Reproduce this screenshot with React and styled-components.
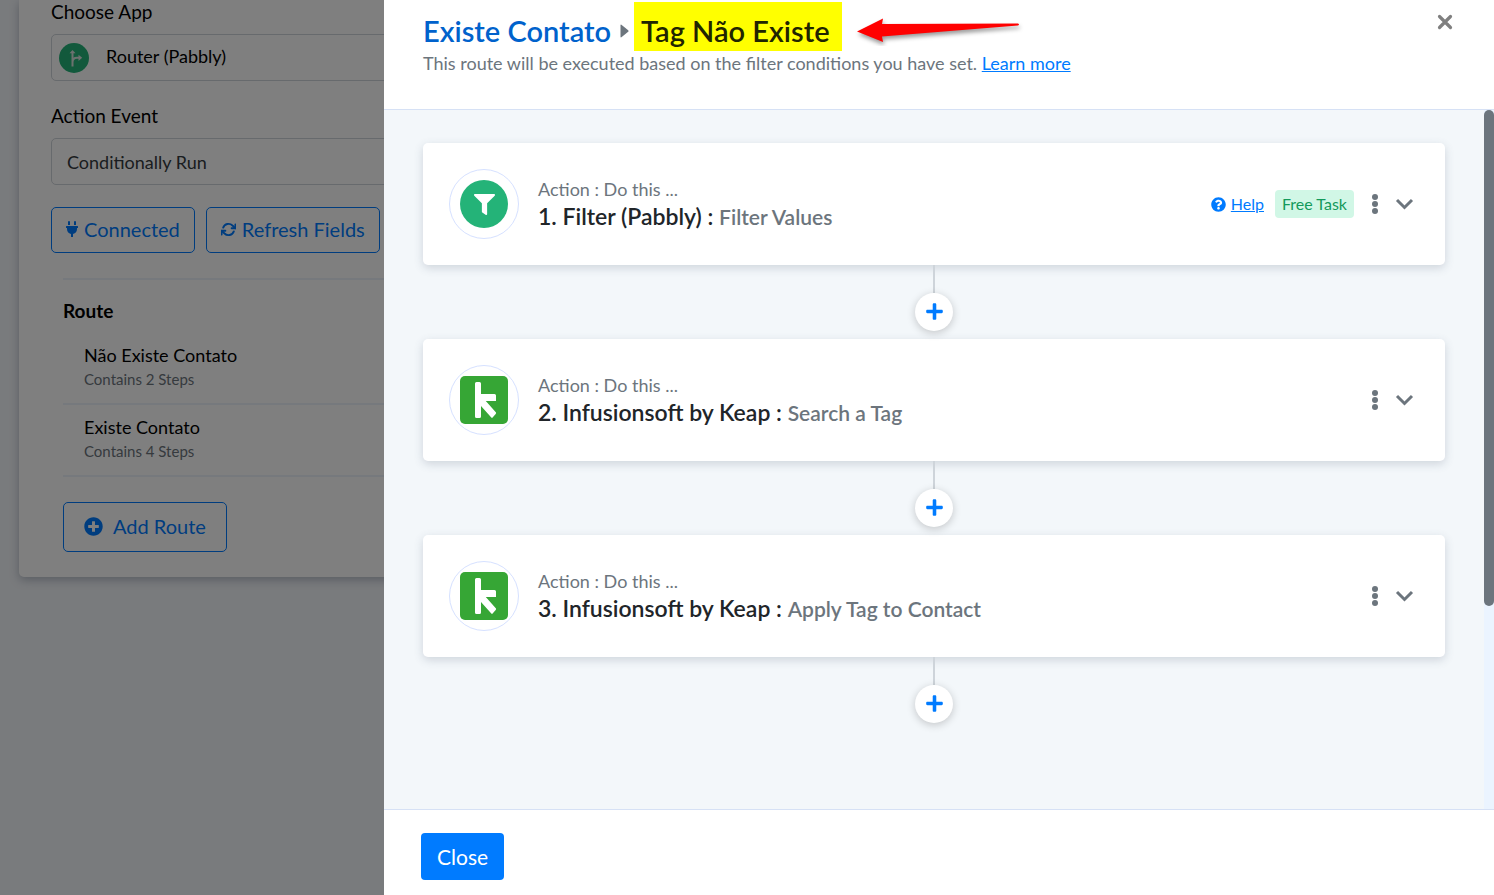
import React, {useState} from "react";
import styled, {createGlobalStyle} from "styled-components";
import {
    FaPlug,
    FaPlusCircle,
    FaPlus,
    FaQuestionCircle,
    FaFilter,
} from "react-icons/fa";
import {FiRefreshCw} from "react-icons/fi";

const GlobalStyle = createGlobalStyle`
    *, *::before, *::after {
        box-sizing : border-box;
    }

    body {
        margin : 0;
        overflow : hidden;
        background : #f3f6fa;
        color : #212529;
        font-family : Lato, "Open Sans", sans-serif;
        font-size : 18px;
        line-height : 24px;
    }

    button, select {
        font-family : inherit;
    }

    a {
        color : #007bff;
    }
`;

/* ---------- page behind the drawer ---------- */

const Page = styled.main`
    min-height : 100vh;
    padding : 0 19px;
`;

const SetupCard = styled.section`
    padding : 0 32px 25px;
    background : #fff;
    border-radius : 0 0 5px 5px;
    box-shadow : 0 3px 10px rgba(60, 75, 100, 0.35);
`;

const Field = styled.div`
    padding-bottom : ${props => props.$last ? 22 : 23}px;
`;

const FieldLabel = styled.label`
    display : block;
    margin-bottom : 10px;
    color : #000;
    font-size : 19px;
`;

const SelectBox = styled.div`
    position : relative;
`;

const Select = styled.select`
    display : block;
    width : 100%;
    height : 47px;
    padding : ${props => props.$withIcon ? "0 15px 4px 54px" : "0 15px"};
    appearance : none;
    background : #fff;
    border : 1px solid #ced4da;
    border-radius : 5px;
    color : ${props => props.$withIcon ? "#000" : "#343a40"};
    font-size : 18px;
`;

const SelectIcon = styled.svg`
    position : absolute;
    left : 8px;
    top : 9px;
`;

const ButtonRow = styled.div`
    display : flex;
    gap : 11px;
`;

const OutlineButton = styled.button`
    display : inline-flex;
    align-items : center;
    justify-content : center;
    gap : ${props => props.$large ? 10 : 6}px;
    height : ${props => props.$large ? 50 : 46}px;
    padding : 0 ${props => props.$large ? 20 : 14}px 2px;
    background : transparent;
    border : 1px solid #007bff;
    border-radius : 5px;
    color : #007bff;
    font-size : 20px;
    white-space : nowrap;
`;

const PlugIcon = styled(FaPlug)`
    width : 12px;
    height : 16px;
`;

const Routes = styled.div`
    margin : 25px 0 0 12px;
    border-top : 2px solid #edf3fa;
`;

const RoutesTitle = styled.h2`
    margin : 0;
    padding : 19px 0 10px;
    color : #000;
    font-size : 19px;
    font-weight : 700;
    line-height : 24px;
`;

const RouteList = styled.ul`
    margin : 0 0 25px;
    padding : 0;
    list-style : none;
`;

const RouteItem = styled.li`
    padding : 10px 21px 12px;
    border-bottom : 2px solid #edf3fa;
`;

const RouteName = styled.div`
    color : #000;
    font-size : 18px;
`;

const RouteInfo = styled.div`
    color : #6c757d;
    font-size : 15px;
`;

const Backdrop = styled.div`
    position : fixed;
    inset : 0;
    background : rgba(0, 0, 0, 0.5);
`;

/* ---------- drawer ---------- */

const Drawer = styled.aside`
    position : fixed;
    top : 0;
    right : 0;
    bottom : 0;
    left : 384px;
    display : flex;
    flex-direction : column;
    background : #fff;
`;

const DrawerHeader = styled.header`
    display : flex;
    align-items : flex-start;
    justify-content : space-between;
    padding : 2px 41px 34px 39px;
    border-bottom : 1px solid #d6e1f5;
`;

const Title = styled.h1`
    display : flex;
    align-items : flex-end;
    margin : 0;
    font-size : 29px;
    font-weight : 600;
    line-height : 41px;
`;

const Crumb = styled.span`
    color : #0062cc;
`;

const CrumbArrow = styled.svg`
    margin : 0 5px 13px 9px;
`;

const Highlight = styled.mark`
    position : relative;
    padding : 8px 12px 0 7px;
    background : #ff0;
    color : #212500;
`;

const PointerArrow = styled.svg`
    position : absolute;
    left : 100%;
    top : 8px;
    margin-left : 10px;
`;

const Subtitle = styled.p`
    margin : 0;
    color : #6c757d;
`;

const CloseIcon = styled.button`
    display : flex;
    padding : 11px 0 0;
    background : none;
    border : 0;
`;

const DrawerBody = styled.div`
    display : flex;
    flex : 1;
    min-height : 0;
    background : #f3f7fa;
`;

const StepList = styled.div`
    flex : 1;
    overflow-y : auto;
    padding : 33px 39px 366px;
    scrollbar-width : none;
`;

const ScrollTrack = styled.div`
    width : 10px;
    background : #ebf4ff;
`;

const ScrollThumb = styled.div`
    height : 71%;
    background : #6c757d;
    border-radius : 5px;
`;

const DrawerFooter = styled.footer`
    padding : 23px 37px 15px;
    border-top : 1px solid #d6e1f5;
`;

const PrimaryButton = styled.button`
    height : 47px;
    padding : 0 16px 1px;
    background : #007bff;
    border : 0;
    border-radius : 4px;
    color : #fff;
    font-size : 21px;
`;

const StepCard = styled.article`
    display : flex;
    align-items : center;
    padding : 26px;
    background : #fff;
    border-radius : 5px;
    box-shadow : 0 3px 10px rgba(60, 75, 100, 0.2);
`;

const AppIcon = styled.div`
    display : flex;
    align-items : center;
    justify-content : center;
    width : 70px;
    height : 70px;
    margin-right : 19px;
    border : 1px solid #d6e1ff;
    border-radius : 50%;
`;

const FilterBadge = styled.div`
    display : flex;
    align-items : center;
    justify-content : center;
    width : 48px;
    height : 48px;
    border-radius : 50%;
    background : #24b378;
    color : #fff;
    font-size : 21px;
`;

const StepText = styled.div`
    flex : 1;
`;

const StepHint = styled.div`
    color : #6c757d;
    font-size : 18px;
`;

const StepName = styled.h3`
    margin : 0;
    font-size : 23px;
    font-weight : 600;
    line-height : 30px;
`;

const StepEvent = styled.span`
    color : #6c757d;
    font-size : 21px;
`;

const StepActions = styled.div`
    display : flex;
    align-items : center;
    padding-right : 5px;
`;

const HelpLink = styled.a`
    margin : 0 11px 0 5px;
    font-size : 16px;
`;

const HelpIcon = styled(FaQuestionCircle)`
    color : #007bff;
    font-size : 15px;
`;

const FreeTag = styled.span`
    padding : 2px 7px;
    margin-right : 17px;
    background : #d1f7e6;
    border-radius : 4px;
    color : #149a5b;
    font-size : 16px;
`;

const IconButton = styled.button`
    display : flex;
    padding : 0;
    margin-left : ${props => props.$gap || 0}px;
    background : none;
    border : 0;
    color : #6c757d;
`;

const Connector = styled.div`
    display : flex;
    flex-direction : column;
    align-items : center;
    padding-bottom : 8px;

    &::before {
        content : "";
        width : 2px;
        height : 28px;
        background : #ced4da;
    }
`;

const AddStep = styled.button`
    display : flex;
    align-items : center;
    justify-content : center;
    width : 38px;
    height : 38px;
    padding : 0 0 1px;
    background : #fff;
    border : 0;
    border-radius : 50%;
    box-shadow : 0 2px 8px rgba(0, 0, 0, 0.2);
    color : #007bff;
    font-size : 19px;
`;

function RouterIcon(){
    return(
        <SelectIcon width="30" height="30" viewBox="0 0 30 30" aria-hidden="true">
            <circle cx="15" cy="15" r="15" fill="#24b378" />
            <path
                d="M13.500 23.500V9M13.500 19.500c0-2.600 1.500-4.700 4.500-4.700h2"
                fill="none" stroke="#d9e2de" strokeWidth="2"
            />
            <path d="M10.500 10.300L13.500 7l3 3.300zM19.500 11.700l3.700 3.100-3.700 3.100z" fill="#d9e2de" />
        </SelectIcon>
    );
}

function KeapIcon(){
    return(
        <svg width="48" height="48" viewBox="0 0 48 48" aria-hidden="true">
            <rect width="48" height="48" rx="5" fill="#36a635" />
            <path
                d="M15 7.500Q15 6 16.500 6H19.500Q21 6 21 7.500V18H34.500Q36 18 36 19.500V25H25.800L36 36.500Q36.300 37.300 35.700 38L32.600 41.600Q32 42.200 31.300 41.500L21 30V40.500Q21 42 19.500 42H16.500Q15 42 15 40.500Z"
                fill="#fff"
            />
        </svg>
    );
}

function StepIcon({app}){
    if(app === "filter"){
        return <FilterBadge><FaFilter /></FilterBadge>;
    }
    return <KeapIcon />;
}

const routes = [
    {name : "Não Existe Contato", info : "Contains 2 Steps"},
    {name : "Existe Contato", info : "Contains 4 Steps"},
];

const steps = [
    {id : 1, app : "filter", name : "Filter (Pabbly)", event : "Filter Values", free : true},
    {id : 2, app : "keap", name : "Infusionsoft by Keap", event : "Search a Tag"},
    {id : 3, app : "keap", name : "Infusionsoft by Keap", event : "Apply Tag to Contact"},
];

function Step({step}){
    return(
        <>
            <StepCard>
                <AppIcon><StepIcon app = {step.app} /></AppIcon>
                <StepText>
                    <StepHint>Action : Do this ...</StepHint>
                    <StepName>
                        {step.id}. {step.name} : <StepEvent>{step.event}</StepEvent>
                    </StepName>
                </StepText>
                <StepActions>
                    {step.free && (
                        <>
                            <HelpIcon />
                            <HelpLink href="#help">Help</HelpLink>
                            <FreeTag>Free Task</FreeTag>
                        </>
                    )}
                    <IconButton aria-label="More options">
                        <svg width="8" height="20" viewBox="0 0 8 20" fill="currentColor">
                            <circle cx="4" cy="3" r="3" />
                            <circle cx="4" cy="10" r="3" />
                            <circle cx="4" cy="17" r="3" />
                        </svg>
                    </IconButton>
                    <IconButton $gap = {16} aria-label="Expand step">
                        <svg width="19" height="12" viewBox="0 0 19 12" fill="none">
                            <path d="M2 2L9.500 9.500L17 2" stroke="currentColor" strokeWidth="3" />
                        </svg>
                    </IconButton>
                </StepActions>
            </StepCard>
            <Connector>
                <AddStep aria-label="Add step"><FaPlus /></AddStep>
            </Connector>
        </>
    );
}

function RouteDrawer({onClose}){
    const [scrollTop, setScrollTop] = useState(0);

    return(
        <Drawer role="dialog" aria-labelledby="route-title">
            <DrawerHeader>
                <div>
                    <Title id="route-title">
                        <Crumb>Existe Contato</Crumb>
                        <CrumbArrow width="9" height="14" viewBox="0 0 9 14" aria-hidden="true">
                            <path d="M0.500 1.500Q0.500 0 1.700 0.900L8.200 6.200Q9 7 8.200 7.800L1.700 13.100Q0.500 14 0.500 12.500Z" fill="#6c757d" />
                        </CrumbArrow>
                        <Highlight>
                            Tag Não Existe
                            <PointerArrow width="172" height="36" viewBox="0 0 172 36" aria-hidden="true">
                                <path
                                    d="M5 21.500L31 8.500L30 14L166 13.500Q168 14.500 166 15.500L30 26.500L31 32Z"
                                    fill="#f00"
                                    style={{filter : "drop-shadow(1px 3px 2px rgba(0, 0, 0, 0.4))"}}
                                />
                            </PointerArrow>
                        </Highlight>
                    </Title>
                    <Subtitle>
                        This route will be executed based on the filter conditions you have set.{" "}
                        <a href="#learn-more">Learn more</a>
                    </Subtitle>
                </div>
                <CloseIcon aria-label="Close panel" onClick = {onClose}>
                    <svg width="16" height="18" viewBox="0 0 16 18" fill="none">
                        <path
                            d="M2.500 3.500L13.500 14.500M13.500 3.500L2.500 14.500"
                            stroke="#7f7f7f" strokeWidth="3.200" strokeLinecap="round"
                        />
                    </svg>
                </CloseIcon>
            </DrawerHeader>
            <DrawerBody>
                <StepList onScroll = {(event) => setScrollTop(event.target.scrollTop)}>
                    {steps.map(step => <Step key = {step.id} step = {step} />)}
                </StepList>
                <ScrollTrack>
                    <ScrollThumb style={{transform : `translateY(${scrollTop * 0.71}px)`}} />
                </ScrollTrack>
            </DrawerBody>
            <DrawerFooter>
                <PrimaryButton onClick = {onClose}>Close</PrimaryButton>
            </DrawerFooter>
        </Drawer>
    );
}

function App(){
    const [open, setOpen] = useState(true);

    return(
        <>
            <GlobalStyle />
            <Page>
                <SetupCard>
                    <Field>
                        <FieldLabel htmlFor="app">Choose App</FieldLabel>
                        <SelectBox>
                            <Select id="app" $withIcon>
                                <option>Router (Pabbly)</option>
                            </Select>
                            <RouterIcon />
                        </SelectBox>
                    </Field>
                    <Field $last>
                        <FieldLabel htmlFor="event">Action Event</FieldLabel>
                        <Select id="event">
                            <option>Conditionally Run</option>
                        </Select>
                    </Field>
                    <ButtonRow>
                        <OutlineButton><PlugIcon /> Connected</OutlineButton>
                        <OutlineButton><FiRefreshCw size={15} strokeWidth={3} /> Refresh Fields</OutlineButton>
                    </ButtonRow>
                    <Routes>
                        <RoutesTitle>Route</RoutesTitle>
                        <RouteList>
                            {routes.map(route => (
                                <RouteItem key = {route.name}>
                                    <RouteName>{route.name}</RouteName>
                                    <RouteInfo>{route.info}</RouteInfo>
                                </RouteItem>
                            ))}
                        </RouteList>
                        <OutlineButton $large onClick = {() => setOpen(true)}>
                            <FaPlusCircle size={19} /> Add Route
                        </OutlineButton>
                    </Routes>
                </SetupCard>
            </Page>
            {open && (
                <>
                    <Backdrop />
                    <RouteDrawer onClose = {() => setOpen(false)} />
                </>
            )}
        </>
    );
}

export default App;
